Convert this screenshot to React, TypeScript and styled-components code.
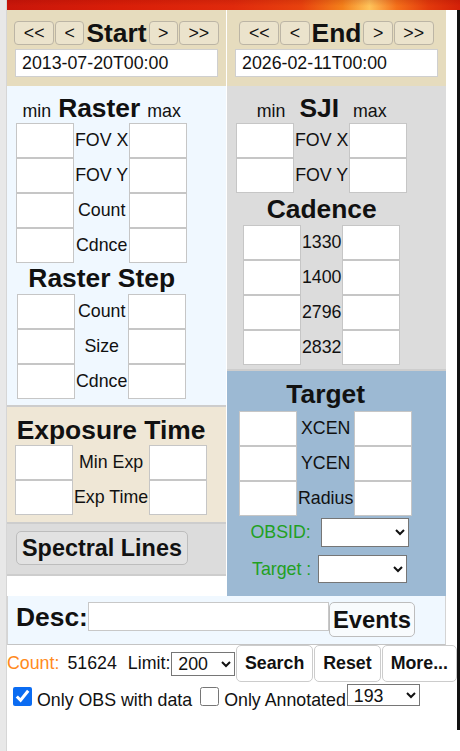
import { Fragment } from "react";

import styled, { createGlobalStyle } from "styled-components";

const rasterRows = ["FOV X", "FOV Y", "Count", "Cdnce"];
const stepRows = ["Count", "Size", "Cdnce"];
const sjiRows = ["FOV X", "FOV Y"];
const cadenceRows = ["1330", "1400", "2796", "2832"];
const exposureRows = ["Min Exp", "Exp Time"];
const targetRows = ["XCEN", "YCEN", "Radius"];

export default function App() {
  return (
    <>
      <GlobalStyle />
      <Shell>
        <Gutter />
        <Column>
          <SunBar />
          <Frame>
            <Columns>
              <Stack>
                <Panel $bg="#e6dcbe" $pad="10px 8px 9px">
                  <DateNav title="Start" value="2013-07-20T00:00" />
                </Panel>
                <Panel $bg="#f0f8ff" $pad="7px 9px 6px" $line>
                  <Inner>
                    <RangeHead $gap={7}>
                      <Small>min</Small>
                      <Heading>Raster</Heading>
                      <Small>max</Small>
                    </RangeHead>
                    <RangeGrid labels={rasterRows} />
                    <Heading $height={31}>Raster Step</Heading>
                    <RangeGrid labels={stepRows} />
                  </Inner>
                </Panel>
                <Panel $bg="#efe7d6" $pad="8px 8px 7px" $line>
                  <Inner>
                    <Heading>Exposure Time</Heading>
                    <RangeGrid labels={exposureRows} />
                  </Inner>
                </Panel>
                <Panel $bg="#dcdcdc" $pad="7px 9px 9px" $line>
                  <BigButton>Spectral Lines</BigButton>
                </Panel>
              </Stack>

              <Stack>
                <Panel $bg="#e6dcbe" $pad="10px 8px 9px">
                  <DateNav title="End" value="2026-02-11T00:00" />
                </Panel>
                <Panel $bg="#dcdcdc" $pad="7px 9px 4px" $line>
                  <Inner>
                    <RangeHead $gap={14}>
                      <Small>min</Small>
                      <Heading>SJI</Heading>
                      <Small>max</Small>
                    </RangeHead>
                    <RangeGrid labels={sjiRows} />
                    <Heading $height={32}>Cadence</Heading>
                    <RangeGrid labels={cadenceRows} />
                  </Inner>
                </Panel>
                <Panel $bg="#9cb9d3" $pad="8px 12px 13px">
                  <Inner>
                    <Heading $after={2}>Target</Heading>
                    <RangeGrid labels={targetRows} />
                    <SelectRow $top={2} $gap={10}>
                      <GreenLabel>OBSID:</GreenLabel>
                      <Select $w={88} $h={29}>
                        <option></option>
                      </Select>
                    </SelectRow>
                    <SelectRow $top={8} $gap={7}>
                      <GreenLabel>Target :</GreenLabel>
                      <Select $w={89} $h={28}>
                        <option></option>
                      </Select>
                    </SelectRow>
                  </Inner>
                </Panel>
              </Stack>
            </Columns>

            <DescBar>
              <DescLabel>Desc:</DescLabel>
              <DescInput type="text" />
              <BigButton $compact>Events</BigButton>
            </DescBar>

            <CountRow>
              <Orange>Count:</Orange>
              <Plain $left={8}>51624</Plain>
              <Plain $left={11}>Limit:</Plain>
              <Select $w={66} $h={24} $left={1}>
                <option>200</option>
              </Select>
              <ActionButton>Search</ActionButton>
              <ActionButton>Reset</ActionButton>
              <ActionButton>More...</ActionButton>
            </CountRow>

            <CheckRow>
              <Check type="checkbox" defaultChecked $left={6} />
              <CheckLabel>Only OBS with data</CheckLabel>
              <Check type="checkbox" $left={8} />
              <CheckLabel>Only Annotated</CheckLabel>
              <Select $w={73} $h={22} $left={1} $bottom={4}>
                <option>193</option>
              </Select>
            </CheckRow>
          </Frame>
        </Column>
      </Shell>
    </>
  );
}

function DateNav({ title, value }: { title: string; value: string }) {
  return (
    <>
      <NavRow>
        <NavButton>&lt;&lt;</NavButton>
        <NavButton>&lt;</NavButton>
        <NavTitle>{title}</NavTitle>
        <NavButton>&gt;</NavButton>
        <NavButton>&gt;&gt;</NavButton>
      </NavRow>
      <DateInput type="text" defaultValue={value} />
    </>
  );
}

function RangeGrid({ labels }: { labels: string[] }) {
  return (
    <FieldGrid>
      {labels.map((label) => (
        <Fragment key={label}>
          <Cell type="text" />
          <Label>{label}</Label>
          <Cell type="text" />
        </Fragment>
      ))}
    </FieldGrid>
  );
}

const GlobalStyle = createGlobalStyle`
  html, body {
    margin: 0;
    padding: 0;
    background: #ffffff;
  }

  body {
    font-family: "Liberation Sans", Arial, sans-serif;
    font-size: 17.8px;
    color: #111111;
  }

  input, button, select {
    font-family: inherit;
    font-size: inherit;
    color: inherit;
  }
`;

const Shell = styled.div`
  display: flex;
  min-height: 100vh;
`;

const Gutter = styled.div`
  width: 7px;
  flex-shrink: 0;
  background: #e8e8e8;
  border-right: 1px solid #d6d6d6;
  box-sizing: border-box;
`;

const Column = styled.div`
  width: 453px;
  display: flex;
  flex-direction: column;
`;

const SunBar = styled.div`
  height: 10px;
  background:
    linear-gradient(180deg, rgba(120, 0, 0, 0.15), rgba(255, 60, 0, 0) 60%),
    linear-gradient(
      90deg,
      #c9160a 0%,
      #d91e08 25%,
      #e02a0c 50%,
      #e8420e 65%,
      #f4801a 74%,
      #ffc45a 80%,
      #f5701a 86%,
      #e33a0c 93%,
      #d42008 100%
    );
`;

const Frame = styled.div`
  height: 720px;
  border-right: 3px solid #111111;
  box-sizing: border-box;
`;

const Columns = styled.div`
  width: 439px;
  display: grid;
  grid-template-columns: 219px 219px;
  column-gap: 1px;
  align-items: start;
`;

const Stack = styled.div`
  display: flex;
  flex-direction: column;
`;

const Panel = styled.section<{ $bg: string; $pad: string; $line?: boolean }>`
  background: ${(props) => props.$bg};
  padding: ${(props) => props.$pad};
  border-bottom: ${(props) => (props.$line ? "2px solid #cdcdcd" : "none")};
`;

const Inner = styled.div`
  width: fit-content;
  display: flex;
  flex-direction: column;
  align-items: center;
`;

const NavRow = styled.div`
  width: 203px;
  height: 26px;
  margin-bottom: 3px;
  display: flex;
  align-items: center;
  justify-content: center;
  gap: 1px;
`;

const NavButton = styled.button`
  height: 24px;
  padding: 0 8.5px;
  border: 1px solid #bcb5a5;
  border-radius: 4px;
  background: rgba(255, 255, 255, 0.22);
  line-height: 22px;
  cursor: pointer;
`;

const NavTitle = styled.h2`
  margin: 0 1px;
  font-size: 26.4px;
  line-height: 26px;
  font-weight: bold;
`;

const DateInput = styled.input`
  width: 203px;
  height: 28px;
  box-sizing: border-box;
  padding: 0 6px;
  border: 1px solid #cfcfcf;
  background: #ffffff;
  outline: none;
`;

const RangeHead = styled.div<{ $gap: number }>`
  height: 30px;
  display: flex;
  align-items: baseline;
  gap: ${(props) => props.$gap}px;
`;

const Small = styled.span`
  font-size: 17.8px;
`;

const Heading = styled.h3<{ $height?: number; $after?: number }>`
  margin: 0 0 ${(props) => props.$after ?? 0}px;
  font-size: 26.4px;
  font-weight: bold;
  line-height: ${(props) => props.$height ?? 30}px;
  white-space: nowrap;
`;

const FieldGrid = styled.div`
  display: grid;
  grid-template-columns: 58px auto 58px;
  grid-auto-rows: 35px;
`;

const Cell = styled.input`
  width: 58px;
  height: 35px;
  box-sizing: border-box;
  margin: 0;
  border: 1px solid #c6c6c6;
  background: #ffffff;
  outline: none;
`;

const Label = styled.span`
  padding: 0 1px;
  line-height: 35px;
  text-align: center;
  white-space: nowrap;
`;

const SelectRow = styled.div<{ $top: number; $gap: number }>`
  margin-top: ${(props) => props.$top}px;
  padding-left: 8px;
  display: flex;
  align-items: center;
  gap: ${(props) => props.$gap}px;
`;

const GreenLabel = styled.span`
  color: #22a022;
`;

const Select = styled.select<{ $w: number; $h: number; $left?: number; $bottom?: number }>`
  width: ${(props) => props.$w}px;
  height: ${(props) => props.$h}px;
  margin: 0 0 ${(props) => props.$bottom ?? 0}px ${(props) => props.$left ?? 0}px;
  padding: 0 2px;
  box-sizing: border-box;
  border: 1px solid #767676;
  border-radius: 0;
  background: #ffffff;
`;

const BigButton = styled.button<{ $compact?: boolean }>`
  height: ${(props) => (props.$compact ? 35 : 34)}px;
  padding: 0 ${(props) => (props.$compact ? 3 : 5)}px;
  border: 1px solid #bdbdbd;
  border-radius: 5px;
  background: ${(props) => (props.$compact ? "#f8fbfd" : "#e2e2e2")};
  font-size: ${(props) => (props.$compact ? 23.8 : 23.4)}px;
  font-weight: bold;
  white-space: nowrap;
  cursor: pointer;
`;

const DescBar = styled.div`
  width: 439px;
  box-sizing: border-box;
  padding: 6px 0 7px 8px;
  display: flex;
  align-items: flex-start;
  background: #f0f8ff;
  border-left: 1px solid #d4d4d4;
  border-right: 1px solid #d4d4d4;
  border-bottom: 1px solid #c4c4c4;
`;

const DescLabel = styled.span`
  font-size: 26.4px;
  font-weight: bold;
  line-height: 30px;
`;

const DescInput = styled.input`
  width: 241px;
  height: 29px;
  box-sizing: border-box;
  margin: 0;
  border: 1px solid #c8c8c8;
  background: #ffffff;
  outline: none;
`;

const CountRow = styled.div`
  height: 37px;
  display: flex;
  align-items: center;
  gap: 0;
`;

const Orange = styled.span`
  color: #ff8a1c;
`;

const Plain = styled.span<{ $left: number }>`
  margin-left: ${(props) => props.$left}px;
`;

const ActionButton = styled.button`
  height: 37px;
  margin-left: 1px;
  padding: 0 8px;
  border: 1px solid #cccccc;
  border-radius: 5px;
  background: #ffffff;
  font-weight: bold;
  white-space: nowrap;
  cursor: pointer;
`;

const CheckRow = styled.div`
  height: 26px;
  margin-top: 2px;
  display: flex;
  align-items: flex-end;
`;

const Check = styled.input<{ $left: number }>`
  width: 19px;
  height: 19px;
  margin: 0 5px 4px ${(props) => props.$left}px;
  accent-color: #0b6cf2;
`;

const CheckLabel = styled.span`
  line-height: 20px;
  white-space: nowrap;
`;
